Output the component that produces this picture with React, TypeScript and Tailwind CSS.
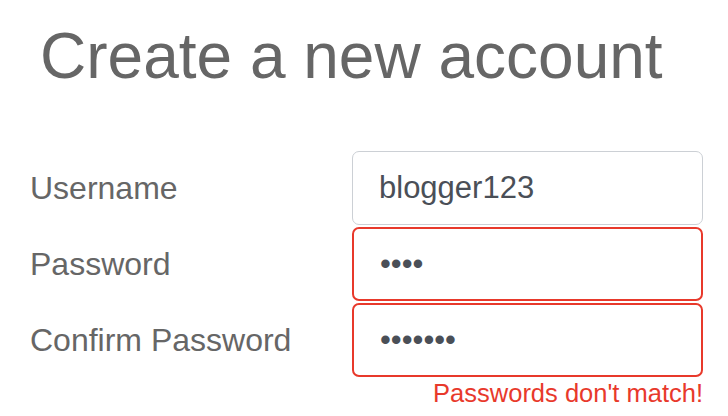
import React from "react"

const fields = [
  { label: "Username", type: "text", value: "blogger123", error: false },
  { label: "Password", type: "password", value: "abcd", error: true },
  { label: "Confirm Password", type: "password", value: "abcdefg", error: true },
]

export default function App() {
  return (
    <div className="w-[728px] h-[416px] bg-white overflow-hidden font-['Liberation_Sans',Arial,sans-serif]">
      <h1 className="pt-[24px] pl-[40px] text-[64px] leading-none text-[#666666] font-normal">
        Create a new account
      </h1>
      <form className="mt-[63px] pl-[30px] pr-[25px] flex flex-col gap-[2px]">
        {fields.map((f) => (
          <div key={f.label} className="flex items-center">
            <label className="flex-1 text-[32px] text-[#666666]">{f.label}</label>
            <input
              type={f.type}
              value={f.value}
              readOnly
              className={
                "w-[351px] h-[74px] rounded-[7px] bg-white pl-[26px] text-[31px] text-[#4a4f57] outline-none " +
                (f.error ? "border-2 border-[#e8392b]" : "border-[1.5px] border-[#ccd0d5]")
              }
            />
          </div>
        ))}
        <p className="text-right text-[25.5px] leading-[29px] text-[#e8392b]">Passwords don't match!</p>
      </form>
    </div>
  )
}
